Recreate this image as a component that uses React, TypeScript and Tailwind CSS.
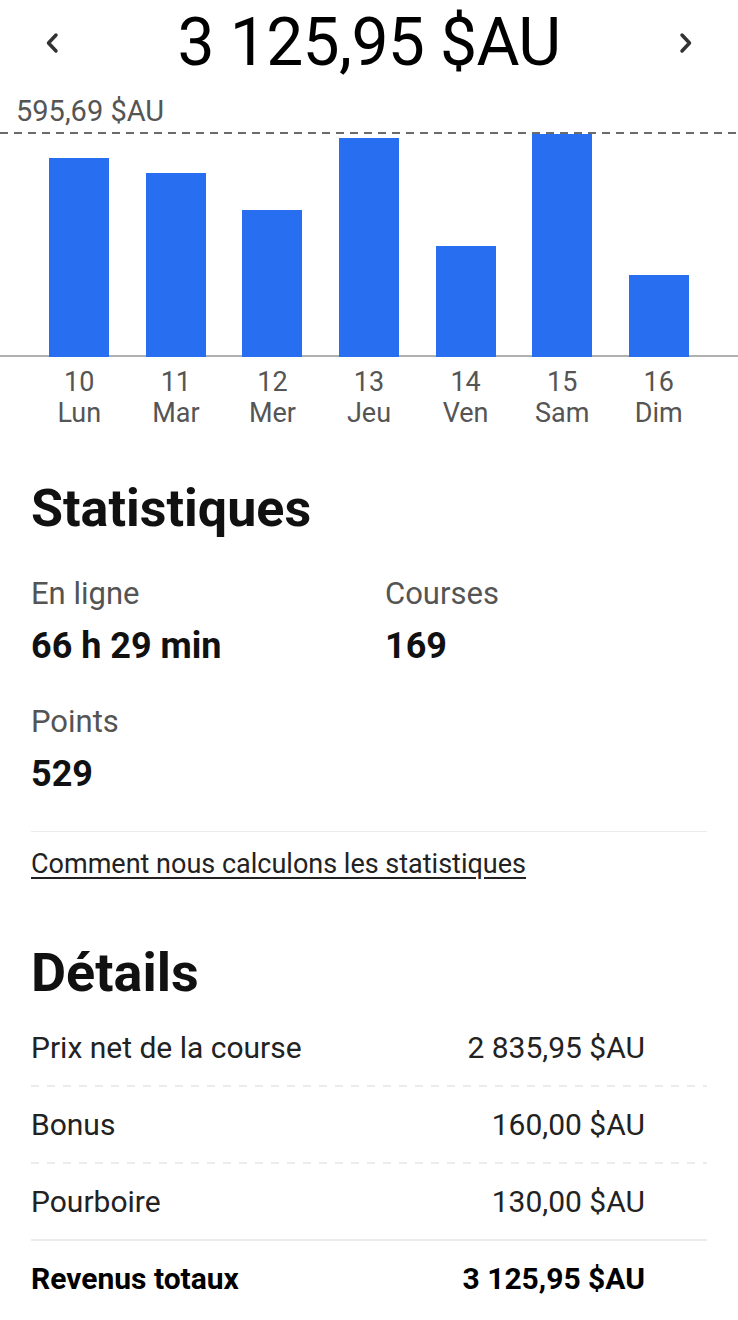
const bars = [
  { day: "10", name: "Lun", h: 200 },
  { day: "11", name: "Mar", h: 185 },
  { day: "12", name: "Mer", h: 148 },
  { day: "13", name: "Jeu", h: 220 },
  { day: "14", name: "Ven", h: 112 },
  { day: "15", name: "Sam", h: 224 },
  { day: "16", name: "Dim", h: 83 },
];

const rows = [
  { label: "Prix net de la course", value: "2 835,95 $AU" },
  { label: "Bonus", value: "160,00 $AU" },
  { label: "Pourboire", value: "130,00 $AU" },
];

const Chevron = ({ dir }: { dir: "left" | "right" }) => (
  <svg width="14" height="22" viewBox="0 0 14 22" fill="none">
    <path
      d={dir === "left" ? "M11 3 L3.5 11 L11 19" : "M3 3 L10.5 11 L3 19"}
      stroke="#333"
      strokeWidth="3.5"
      strokeLinecap="round"
      strokeLinejoin="round"
    />
  </svg>
);

const Dashed = ({ color, dash }: { color: string; dash: string }) => (
  <svg className="block w-full" height="2" preserveAspectRatio="none">
    <line x1="0" y1="1" x2="100%" y2="1" stroke={color} strokeWidth="2" strokeDasharray={dash} />
  </svg>
);

export default function App() {
  return (
    <div className="w-full bg-white text-[#111] font-['Roboto','Liberation_Sans',sans-serif]">
      {/* header */}
      <div className="flex h-[84px] items-center justify-between pl-[45px] pr-[45px] pt-[2px]">
        <Chevron dir="left" />
        <h1 className="text-[66px] leading-none tracking-[-0.01em] text-black">3 125,95 $AU</h1>
        <Chevron dir="right" />
      </div>

      {/* chart */}
      <div className="mt-[10px] pl-[16px] text-[29px] leading-[34px] text-[#555]">595,69 $AU</div>
      <div className="mt-[4px]">
        <Dashed color="#6b6b6b" dash="8 6" />
        <div className="grid h-[223px] grid-cols-7 items-end border-b-2 border-[#b0b0b0] px-[31px]">
          {bars.map((b) => (
            <div key={b.day} className="flex justify-center">
              <div className="w-[60px] bg-[#276ef1]" style={{ height: b.h - 1 }} />
            </div>
          ))}
        </div>
        <div className="mt-[10px] grid grid-cols-7 px-[31px] text-center text-[27px] leading-[31px] text-[#555]">
          {bars.map((b) => (
            <div key={b.day}>
              <div>{b.day}</div>
              <div>{b.name}</div>
            </div>
          ))}
        </div>
      </div>

      {/* stats */}
      <div className="px-[31px]">
        <h2 className="mt-[50px] text-[52px] font-bold leading-[60px]">Statistiques</h2>
        <div className="mt-[37px] grid grid-cols-2 gap-y-[38px]">
          <div>
            <div className="text-[31px] leading-[36px] text-[#545454]">En ligne</div>
            <div className="mt-[14px] text-[36px] font-bold leading-[40px]">66 h 29 min</div>
          </div>
          <div className="pl-[16px]">
            <div className="text-[31px] leading-[36px] text-[#545454]">Courses</div>
            <div className="mt-[14px] text-[36px] font-bold leading-[40px]">169</div>
          </div>
          <div>
            <div className="text-[31px] leading-[36px] text-[#545454]">Points</div>
            <div className="mt-[14px] text-[36px] font-bold leading-[40px]">529</div>
          </div>
        </div>
        <div className="mt-[37px] h-px bg-[#ececec]" />
        <a className="mt-[16px] block text-[27px] leading-[32px] text-[#222] underline underline-offset-4">
          Comment nous calculons les statistiques
        </a>

        {/* details */}
        <h2 className="mt-[63px] text-[54px] font-bold leading-[60px]">Détails</h2>
        <div className="mt-[7px]">
          {rows.map((r) => (
            <div key={r.label}>
              <div className="flex h-[75px] items-center justify-between pr-[62px] text-[30px] text-[#222]">
                <span>{r.label}</span>
                <span>{r.value}</span>
              </div>
              {r.label === "Pourboire" ? (
                <div className="h-[2px] bg-[#ececec]" />
              ) : (
                <Dashed color="#ececec" dash="8 8" />
              )}
            </div>
          ))}
          <div className="flex h-[75px] items-center justify-between pr-[62px] text-[30px] font-bold text-black">
            <span>Revenus totaux</span>
            <span>3 125,95 $AU</span>
          </div>
        </div>
      </div>
    </div>
  );
}
